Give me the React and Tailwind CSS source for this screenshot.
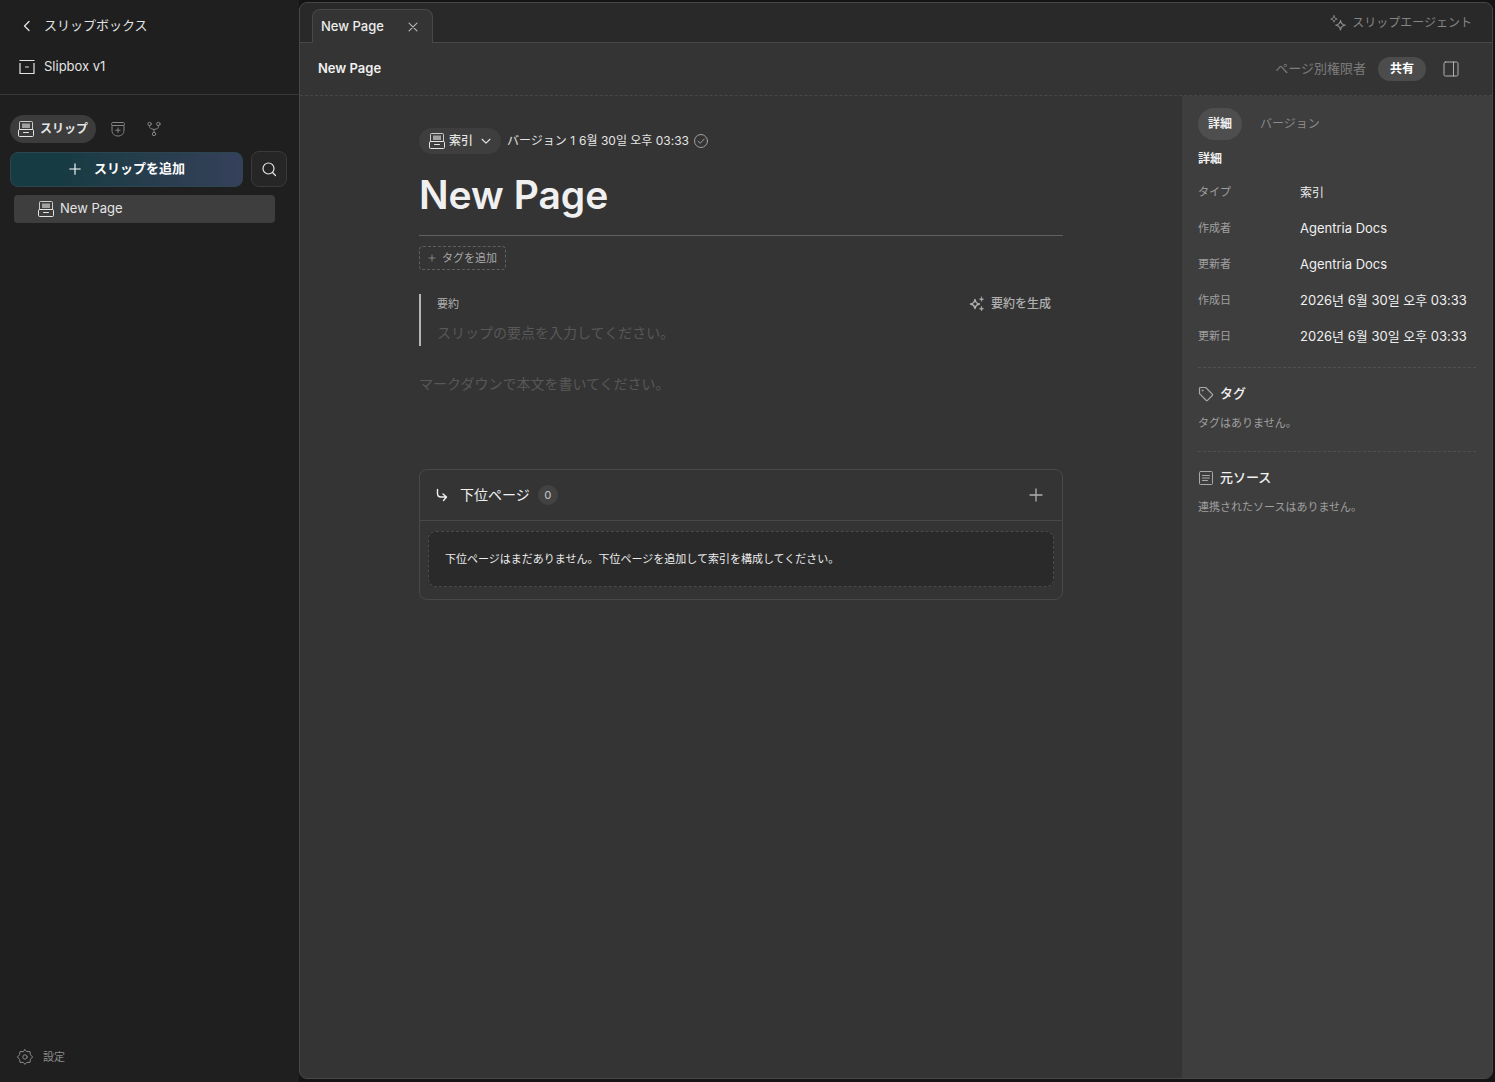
import { useState } from "react";

const FONT = "font-[Inter,'Noto_Sans_CJK_JP','Noto_Sans_CJK_KR',sans-serif]";

// Shared stroke icon wrapper, 16px grid
function Icon({ children, size = 16, className = "" }) {
  return (
    <svg
      width={size}
      height={size}
      viewBox="0 0 16 16"
      fill="none"
      stroke="currentColor"
      strokeLinecap="round"
      strokeLinejoin="round"
      className={`shrink-0 ${className}`}
      aria-hidden="true"
    >
      {children}
    </svg>
  );
}

function DrawerIcon({ className }) {
  return (
    <Icon className={className}>
      <path d="M4 2.500h8V7H4z" fill="currentColor" fillOpacity="0.6" stroke="none" />
      <path d="M1.500 8.500V1.500a1 1 0 011-1h11a1 1 0 011 1v7" strokeOpacity="0.85" />
      <path d="M0.500 9.500a1 1 0 011-1h13a1 1 0 011 1v5a1 1 0 01-1 1h-13a1 1 0 01-1-1z" />
      <path d="M5.500 11.500h5" />
    </Icon>
  );
}

function BoxIcon() {
  return (
    <Icon>
      <path d="M0.500 1.500h15M1 4v10.500h14V4" strokeLinecap="butt" strokeWidth="1.200" />
      <path d="M6.500 8h3" />
    </Icon>
  );
}

function SourceIcon() {
  return (
    <Icon>
      <path d="M3 1.500h10c1 0 1.500.5 1.500 1.200S14 4.500 13 4.500H3c-1 0-1.500-.9-1.500-1.800S2 1.500 3 1.500z" />
      <path d="M2 4.500v4.500c0 4 2.500 6 6 6s6-2 6-6V4.500" />
      <path d="M8 7v4.500M5.800 9.200h4.400" />
    </Icon>
  );
}

function BranchIcon() {
  return (
    <Icon>
      <circle cx="3.600" cy="3" r="1.700" />
      <circle cx="12.400" cy="3" r="1.700" />
      <circle cx="8" cy="13" r="1.700" />
      <path d="M3.600 4.700v1c0 1.200.7 1.900 1.700 2.100L8 8.500l2.700-.7c1-.2 1.700-.9 1.700-2.100v-1M8 8.500v2.800" />
    </Icon>
  );
}

function PlusIcon({ size, className }) {
  return (
    <Icon size={size} className={className}>
      <path d="M8 2v12M2 8h12" strokeWidth="1.300" />
    </Icon>
  );
}

function GearIcon() {
  return (
    <Icon>
      <path d="M8 .6l1.700 2h3.300l.4 3L15.600 8l-2.200 2.400-.4 3H9.700L8 15.400l-1.700-2H3l-.4-3L.4 8l2.200-2.400.4-3h3.300z" />
      <circle cx="8" cy="8" r="2.200" />
    </Icon>
  );
}

// One large star low on the right, a small one top left
function AgentIcon() {
  return (
    <Icon>
      <path d="M10.500 5.500c.5 3 1.700 4.200 4.700 4.700-3 .5-4.200 1.700-4.700 4.700-.5-3-1.700-4.200-4.700-4.700 3-.5 4.200-1.700 4.700-4.700z" strokeWidth="1.300" />
      <path d="M4 .8c.3 2 1.200 2.900 3.200 3.200C5.200 4.300 4.300 5.200 4 7.200 3.700 5.200 2.800 4.300.8 4 2.800 3.700 3.700 2.800 4 .8z" />
    </Icon>
  );
}

// One star left, two small filled ones right
function SparkleIcon() {
  return (
    <Icon>
      <path d="M6 3.500c.5 3 1.500 4 4.500 4.500-3 .5-4 1.500-4.500 4.500C5.500 9.500 4.500 8.500 1.500 8c3-.5 4-1.500 4.500-4.500z" strokeWidth="1.500" />
      <path d="M12.500 1c.2 1.500.7 2 2.200 2.200-1.500.3-2 .8-2.200 2.300-.2-1.500-.7-2-2.200-2.300 1.500-.2 2-.7 2.200-2.200zM12.500 10.500c.2 1.500.7 2 2.200 2.200-1.500.3-2 .8-2.200 2.300-.2-1.500-.7-2-2.200-2.300 1.500-.2 2-.7 2.200-2.200z" fill="currentColor" strokeWidth="0.500" />
    </Icon>
  );
}

function Sidebar() {
  return (
    <aside className="flex w-[299px] shrink-0 flex-col text-[#e4e4e4]">
      <div className="flex flex-col gap-[21px] border-b border-[#383838] px-[19px] pt-4 pb-[17px]">
        <a href="#boxes" className="flex h-5 items-center gap-[9px] text-[13px]">
          <Icon>
            <path d="M10 3.500L5.500 8l4.500 4.500" strokeWidth="1.300" />
          </Icon>
          スリップボックス
        </a>
        <a href="#slipbox" className="flex h-5 items-center gap-[9px] text-[13px]">
          <BoxIcon />
          Slipbox v1
        </a>
      </div>

      <nav className="flex items-center px-2.5 pt-5">
        <button className="mr-1 flex h-7 items-center gap-1.5 rounded-full bg-[#3c3c3c] px-2 text-xs font-bold">
          <DrawerIcon />
          スリップ
        </button>
        <button aria-label="ソース" className="flex h-7 w-9 items-center justify-center text-[#858585]">
          <SourceIcon />
        </button>
        <button aria-label="グラフ" className="flex h-7 w-9 items-center justify-center text-[#858585]">
          <BranchIcon />
        </button>
      </nav>

      <div className="flex items-center gap-2 px-2.5 pt-2 pr-3">
        <button className="flex h-[35px] flex-1 items-center justify-center gap-3 rounded-lg border border-[#2b4650] bg-linear-to-r from-[#163b42] from-20% to-[#35405a] text-[13px] font-bold text-white">
          <PlusIcon size={14} />
          スリップを追加
        </button>
        <button aria-label="検索" className="flex size-9 items-center justify-center rounded-lg border border-[#3a3a3a] bg-[#262626]">
          <Icon>
            <circle cx="7.500" cy="7.500" r="5.500" strokeWidth="1.200" />
            <path d="M11.500 11.500l3 3" strokeWidth="1.200" />
          </Icon>
        </button>
      </div>

      <a href="#new-page" className="mt-2 mr-6 ml-3.5 flex h-7 items-center gap-1.5 rounded bg-[#3e3e3e] pl-6 text-[13px]">
        <DrawerIcon />
        New Page
      </a>

      <button className="mt-auto mb-[15px] ml-[17px] flex h-5 items-center gap-2.5 text-[11px] text-[#8a8a8a]">
        <GearIcon />
        設定
      </button>
    </aside>
  );
}

function Editor() {
  return (
    <article className="min-w-0 flex-1 px-[119px] pt-8">
      <div className="flex items-center text-xs text-[#e4e4e4]">
        <button className="flex h-[26px] items-center gap-1 rounded-full bg-[#3e3e3e] pr-2 pl-2.5 font-medium">
          <DrawerIcon />
          索引
          <Icon size={14} className="ml-0.5">
            <path d="M3.500 6L8 10.500 12.500 6" strokeWidth="1.300" />
          </Icon>
        </button>
        <span className="ml-1.5">バージョン 1</span>
        <time className="mr-1 ml-1">6월 30일 오후 03:33</time>
        <Icon className="text-[#a0a0a0]">
          <circle cx="8" cy="8" r="6.500" />
          <path d="M5 8.200l2.200 2.100 4-4.300" />
        </Icon>
      </div>

      <h1 className="mt-4 border-b border-[#606060] pb-4 text-[39px] leading-[49px] font-semibold text-[#f0f0f0]">New Page</h1>

      <button className="mt-2.5 flex h-6 items-center gap-1.5 rounded border border-dashed border-[#606060] px-2 text-[11px] text-[#a8a8a8]">
        <PlusIcon size={8} />
        タグを追加
      </button>

      <section className="mt-6 flex h-[52px] flex-col border-l-2 border-[#b5b5b5] pl-4">
        <div className="flex h-5 items-center justify-between pr-3">
          <label htmlFor="summary" className="text-[11px] text-[#b0b0b0]">要約</label>
          <button className="flex items-center gap-1.5 text-xs font-medium text-[#b0b0b0]">
            <SparkleIcon />
            要約を生成
          </button>
        </div>
        <input
          id="summary"
          placeholder="スリップの要点を入力してください。"
          className="mt-1.5 h-6 w-full bg-transparent text-sm outline-none placeholder:text-[#585858]"
        />
      </section>

      <textarea
        aria-label="本文"
        placeholder="マークダウンで本文を書いてください。"
        className="mt-6 block h-[99px] w-full resize-none bg-transparent pt-0.5 text-sm leading-6 outline-none placeholder:text-[#585858]"
      />

      <section className="rounded-lg border border-[#484848]">
        <div className="flex h-[51px] items-center border-b border-[#484848] px-3.5 text-[#f0f0f0]">
          <Icon>
            <path d="M3.500 2.500v4c0 2 1.200 3.500 3.500 3.500h5M9 7l3.500 3L9.500 13.500" strokeWidth="1.400" />
          </Icon>
          <h2 className="ml-2.5 text-sm">下位ページ</h2>
          <span className="ml-2 flex size-5 items-center justify-center rounded-full bg-[#424242] text-[11px] font-medium text-[#b8b8b8]">0</span>
          <button aria-label="下位ページを追加" className="ml-auto p-1 text-[#b0b0b0]">
            <PlusIcon size={16} />
          </button>
        </div>
        <div className="px-2 pt-2.5 pb-3">
          <p className="rounded-lg border border-dashed border-[#4a4a4a] bg-[#2a2a2a] px-4 py-[17px] text-[11px] leading-5 text-[#ececec]">
            下位ページはまだありません。下位ページを追加して索引を構成してください。
          </p>
        </div>
      </section>
    </article>
  );
}

const details = [
  { label: "タイプ", value: "索引", small: true },
  { label: "作成者", value: "Agentria Docs" },
  { label: "更新者", value: "Agentria Docs" },
  { label: "作成日", value: "2026년 6월 30일 오후 03:33" },
  { label: "更新日", value: "2026년 6월 30일 오후 03:33" },
];

function DetailPanel() {
  const [tab, setTab] = useState("詳細");

  return (
    <aside className="w-[310px] shrink-0 bg-[#3e3e3e] px-4 pt-3 text-[#f0f0f0]">
      <div className="flex items-center gap-2">
        {["詳細", "バージョン"].map((name) => (
          <button
            key={name}
            onClick={() => setTab(name)}
            className={`h-8 rounded-full px-2.5 text-xs ${
              tab === name ? "bg-[#4e4e4e] font-bold" : "text-[#8a8a8a]"
            }`}
          >
            {name}
          </button>
        ))}
      </div>

      <h2 className="mt-[9px] text-xs leading-5 font-bold">詳細</h2>
      <dl className="mt-3.5 flex flex-col gap-4">
        {details.map(({ label, value, small }) => (
          <div key={label} className="flex h-5 items-center">
            <dt className="w-[102px] shrink-0 pb-0.5 text-[11px] text-[#a0a0a0]">{label}</dt>
            <dd className={small ? "text-xs whitespace-nowrap" : "text-[13px] whitespace-nowrap"}>{value}</dd>
          </div>
        ))}
      </dl>

      <section className="mt-5 border-t border-dashed border-[#505050] pt-4">
        <h3 className="flex h-5 items-center gap-1.5 text-[13px] font-medium">
          <Icon className="text-[#a8a8a8]">
            <path d="M1.500 2.500a1 1 0 011-1h5.200l6.600 6.600a1 1 0 010 1.400l-4.800 4.800a1 1 0 01-1.400 0L1.500 7.700z" strokeWidth="1.200" />
            <circle cx="4.500" cy="4.500" r="0.500" />
          </Icon>
          タグ
        </h3>
        <p className="mt-[9px] text-[11px] leading-5 text-[#a0a0a0]">タグはありません。</p>
      </section>

      <section className="mt-[18px] border-t border-dashed border-[#505050] pt-4">
        <h3 className="flex h-5 items-center gap-1.5 text-[13px] font-medium">
          <Icon className="text-[#a8a8a8]">
            <rect x="1.500" y="1.500" width="13" height="13" rx="1" />
            <path d="M4.500 5.500h7M4.500 8h7M4.500 10.500h5" />
          </Icon>
          元ソース
        </h3>
        <p className="mt-[9px] text-[11px] leading-5 text-[#a0a0a0]">連携されたソースはありません。</p>
      </section>
    </aside>
  );
}

export default function App() {
  return (
    <div lang="ja" className={`flex h-screen bg-[#1f1f1f] ${FONT}`}>
      <Sidebar />
      <div className="flex min-w-0 flex-1 bg-[#141414] pt-0.5 pr-0.5 pb-[3px]">
        <main className="flex min-w-0 flex-1 flex-col overflow-hidden rounded-lg border border-[#484848] bg-[#343434]">
          <div className="flex h-10 shrink-0 items-end justify-between border-b border-[#484848] bg-[#292929] pr-5 pl-3">
            <div className="-mb-px flex h-[34px] items-center gap-[22px] rounded-t-lg border border-b-0 border-[#484848] bg-[#343434] pr-3 pl-2 text-[13px] font-medium text-[#ececec]">
              New Page
              <button aria-label="閉じる" className="text-[#b8b8b8]">
                <Icon size={14}>
                  <path d="M3.500 3.500l9 9M12.500 3.500l-9 9" strokeWidth="1.300" />
                </Icon>
              </button>
            </div>
            <button className="flex h-full items-center gap-1.5 text-xs text-[#858585]">
              <AgentIcon />
              スリップエージェント
            </button>
          </div>

          <header className="flex h-[53px] shrink-0 items-center border-b border-dashed border-[#484848] pr-[33px] pl-[18px] text-[13px]">
            <span className="font-semibold text-[#f0f0f0]">New Page</span>
            <button className="ml-auto text-[#7c7c7c]">ページ別権限者</button>
            <button className="ml-3 h-6 rounded-full bg-[#4c4c4c] px-3 text-xs font-bold text-white">共有</button>
            <button aria-label="パネル" className="ml-[17px] text-[#b0b0b0]">
              <Icon>
                <rect x="1" y="1" width="14" height="14" rx="1.500" />
                <path d="M10.500 1v14" />
              </Icon>
            </button>
          </header>

          <div className="flex min-h-0 flex-1">
            <Editor />
            <DetailPanel />
          </div>
        </main>
      </div>
    </div>
  );
}
